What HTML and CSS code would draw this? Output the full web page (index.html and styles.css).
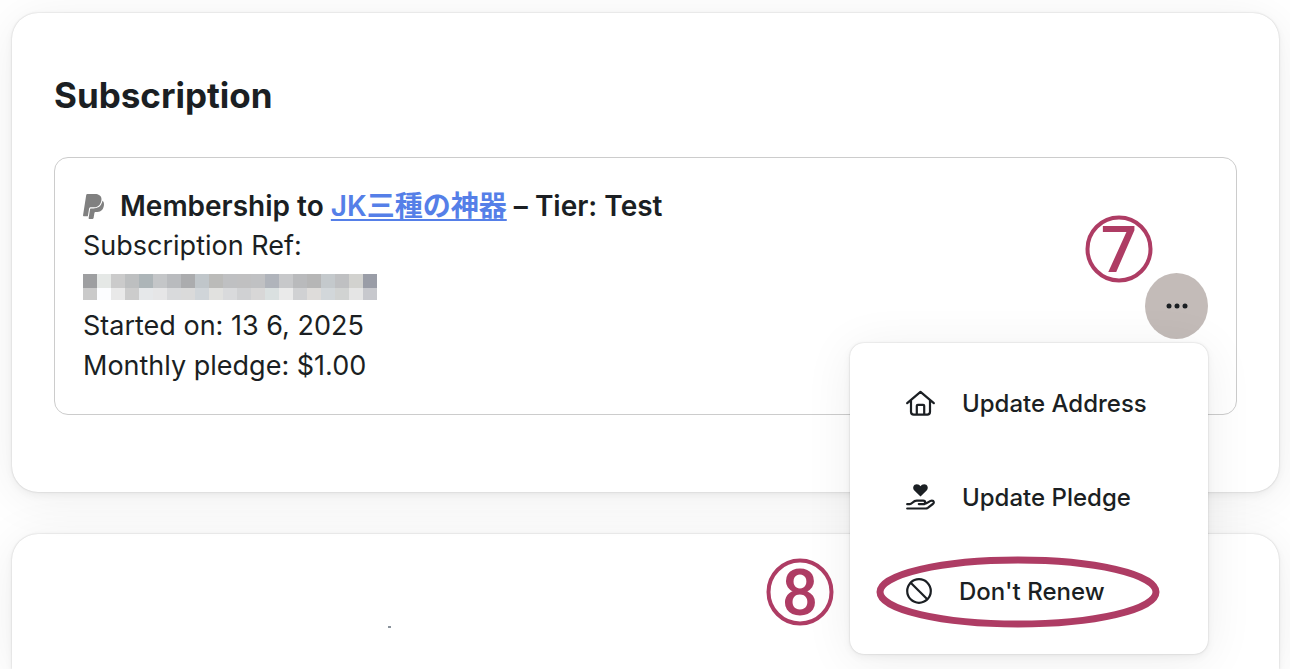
FILE: index.html
```
<!DOCTYPE html>
<html lang="en">
<head>
    <meta charset="UTF-8">
    <meta name="viewport" content="width=device-width, initial-scale=1.0">
    <title>Subscription</title>

    <link rel="stylesheet" href="styles.css">
</head>
<body>
    <main>
        <section class="card">
            <h2>Subscription</h2>
            <div class="subscription">
                <div class="details">
                    <h3>
                        <svg class="paypal" viewBox="0 29 384 454" aria-hidden="true"><path d="M111.4 295.9c-3.5 19.2-17.4 108.7-21.5 134-.3 1.8-1 2.5-3 2.5H12.3c-7.6 0-13.1-6.6-12.1-13.9L58.8 46.6c1.5-9.6 10.1-16.9 20-16.9 152.3 0 165.1-3.7 204 11.4 60.1 23.3 65.6 79.5 44 140.3-21.5 62.6-72.5 89.5-140.1 90.3-43.4.7-69.5-7-75.3 24.2zM357.1 152c-1.8-1.3-2.5-1.8-3 1.3-2 11.4-5.1 22.5-8.8 33.6-39.9 113.8-150.5 103.9-204.5 103.9-6.1 0-10.1 3.3-10.9 9.4-22.6 140.4-27.1 169.7-27.1 169.7-1 7.1 3.5 12.9 10.6 12.9h63.5c8.6 0 15.7-6.3 17.4-14.9.7-5.4-1.1 6.1 14.4-91.3 4.6-22 14.3-19.7 29.3-19.7 71 0 126.4-28.8 142.9-112.3 6.5-34.8 4.6-71.4-23.8-92.6z"/></svg>
                        <span>Membership to <a href="#">JK三種の神器</a> – Tier: Test</span>
                    </h3>
                    <p>Subscription Ref:</p>
                    <!-- reference number is masked -->
                    <svg class="masked" viewBox="0 0 294 26" aria-hidden="true">
                        <g class="mask-row">
                            <path fill="#9e9fa1" d="M0 0h14v14H0z"/><path fill="#e5e8e6" d="M14 0h14v14H14z"/><path fill="#cbcbcb" d="M28 0h14v14H28z"/><path fill="#bdbfc0" d="M42 0h14v14H42z"/><path fill="#adb5b8" d="M56 0h14v14H56z"/><path fill="#c4c6c8" d="M70 0h14v14H70z"/><path fill="#b9bbbe" d="M84 0h14v14H84z"/><path fill="#abacae" d="M98 0h14v14H98z"/><path fill="#c0c6ca" d="M112 0h14v14h-14z"/><path fill="#bbbbb9" d="M126 0h14v14h-14z"/><path fill="#bfc0c2" d="M140 0h14v14h-14z"/><path fill="#c0c0c1" d="M154 0h14v14h-14z"/><path fill="#c0c1c3" d="M168 0h14v14h-14z"/><path fill="#b0b4bb" d="M182 0h14v14h-14z"/><path fill="#c7c8ca" d="M196 0h14v14h-14z"/><path fill="#b9babc" d="M210 0h14v14h-14z"/><path fill="#b6b6b6" d="M224 0h14v14h-14z"/><path fill="#c4c9cc" d="M238 0h14v14h-14z"/><path fill="#bfc0c2" d="M252 0h14v14h-14z"/><path fill="#d2d2cf" d="M266 0h14v14h-14z"/><path fill="#9a9da7" d="M280 0h14v14h-14z"/>
                        </g>
                        <g class="mask-row">
                            <path fill="#cacaca" d="M0 14h14v12H0z"/><path fill="#fcfdff" d="M14 14h14v12H14z"/><path fill="#e9e9e9" d="M28 14h14v12H28z"/><path fill="#cccccc" d="M42 14h14v12H42z"/><path fill="#e6e8ea" d="M56 14h14v12H56z"/><path fill="#e6e6e7" d="M70 14h14v12H70z"/><path fill="#d9dadc" d="M84 14h14v12H84z"/><path fill="#dadada" d="M98 14h14v12H98z"/><path fill="#d0d5d9" d="M112 14h14v12h-14z"/><path fill="#e1e1df" d="M126 14h14v12h-14z"/><path fill="#d9dadc" d="M140 14h14v12h-14z"/><path fill="#d0d1d3" d="M154 14h14v12h-14z"/><path fill="#d8d7d7" d="M168 14h14v12h-14z"/><path fill="#dae0e0" d="M182 14h14v12h-14z"/><path fill="#eaeaea" d="M196 14h14v12h-14z"/><path fill="#d0d1d3" d="M210 14h14v12h-14z"/><path fill="#dedcda" d="M224 14h14v12h-14z"/><path fill="#d2d7da" d="M238 14h14v12h-14z"/><path fill="#d1d3d2" d="M252 14h14v12h-14z"/><path fill="#e5e5e5" d="M266 14h14v12h-14z"/><path fill="#c7c8cd" d="M280 14h14v12h-14z"/>
                        </g>
                    </svg>
                    <p>Started on: 13 6, 2025</p>
                    <p>Monthly pledge: $1.00</p>
                </div>

                <div class="actions">
                    <button class="more" type="button" aria-label="More options">
                        <svg width="22" height="6" viewBox="0 0 22 6" aria-hidden="true"><circle cx="3" cy="3" r="2.5"/><circle cx="11" cy="3" r="2.5"/><circle cx="19" cy="3" r="2.5"/></svg>
                    </button>
                    <svg class="step step-more" viewBox="0 0 68 68">
                        <circle cx="34" cy="34" r="31.5"/>
                        <text x="34" y="57">7</text>
                    </svg>

                    <div class="menu">
                        <button class="menu-item" type="button">
                            <svg class="line-icon" width="29" height="26" viewBox="0 0 29 26" aria-hidden="true"><path d="M1.2 13.2 14.5 1.8l13.3 11.4M5 10.5v11.3a2.8 2.8 0 0 0 2.8 2.8h13.4a2.8 2.8 0 0 0 2.8-2.8V10.5M10.8 24.5v-8.7a1 1 0 0 1 1-1h5.4a1 1 0 0 1 1 1v8.7"/></svg>
                            <span>Update Address</span>
                        </button>
                        <button class="menu-item" type="button">
                            <svg class="line-icon" width="29" height="26" viewBox="0 0 29 26" aria-hidden="true"><path class="solid" d="M14.5 12.5 8.6 6.7C5.7 3.8 7.7.2 10.8.2c1.7 0 2.9.8 3.7 2 .8-1.2 2-2 3.7-2 3.1 0 5.1 3.6 2.2 6.5z"/><path d="M1.2 20.2h2.6c2.4 0 3-3.6 7-3.6h6.4c2.8 0 2.6 3.5 0 3.5h-4.4M18.6 19.8c3.3-.4 4.5-3.2 7.3-3.2 2.2 0 2.5 2.3.9 3.4l-5 3.8c-.7.5-1.3.7-2.2.7H1.2"/></svg>
                            <span>Update Pledge</span>
                        </button>
                        <button class="menu-item" type="button">
                            <svg class="line-icon" width="26" height="26" viewBox="0 0 26 26" aria-hidden="true"><circle cx="13" cy="13" r="11.8"/><path d="m4.7 4.7 16.6 16.6"/></svg>
                            <span>Don't Renew</span>
                            <svg class="highlight" viewBox="0 0 284 72" aria-hidden="true"><ellipse cx="142" cy="36" rx="138" ry="32"/></svg>
                        </button>
                        <svg class="step step-renew" viewBox="0 0 68 68">
                            <circle cx="34" cy="34" r="31.5"/>
                            <text x="34" y="57">8</text>
                        </svg>
                    </div>
                </div>
            </div>
        </section>

        <section class="card card-next">
            <svg width="4" height="2" viewBox="0 0 4 2" aria-hidden="true"><path fill="#8a939c" d="M0 1h1V0h3v2H1V1z"/></svg>
        </section>
    </main>
</body>
</html>
```
FILE: styles.css
```
* {
    box-sizing: border-box;
    padding: 0;
    margin: 0;
}

body {
    background-color: white;
    color: #1b1f23;
    font-family: Inter, "Noto Sans CJK JP", sans-serif;
    font-size: 27px;
    line-height: 40px;
}

main {
    display: flex;
    flex-direction: column;
    gap: 42px;
    min-height: 100vh;
    padding: 13px 11px 0 12px;
}

.card {
    padding: 62px 42px 77px;
    border-radius: 26px;
    background-color: white;
    box-shadow: 0 0 2px rgba(0, 0, 0, 0.2), 0 3px 8px rgba(0, 0, 0, 0.05), 0 6px 50px rgba(0, 0, 0, 0.07);
}

.card:first-child {
    position: relative;
    z-index: 1;
}

.card-next {
    display: flex;
    flex: 1;
    align-items: flex-start;
    padding: 92px 42px 0 375px;
    border-radius: 26px 26px 0 0;
}

h2 {
    margin-bottom: 42px;
    font-size: 35px;
    font-weight: 700;
    line-height: 40px;
}

.subscription {
    display: flex;
    justify-content: space-between;
    align-items: center;
    padding: 28px;
    border: 1px solid #cccccc;
    border-radius: 14px;
}

h3 {
    display: flex;
    align-items: center;
    gap: 16px;
    font-size: 28px;
    font-weight: 600;
}

.paypal {
    width: 21px;
    height: 25px;
    fill: #808080;
}

h3 a {
    color: #557fe8;
    text-decoration-thickness: 2px;
    text-underline-offset: 3px;
}

.masked {
    display: block;
    width: 294px;
    height: 26px;
    margin: 8px 0 6px;
    shape-rendering: crispEdges;
}

.actions {
    position: relative;
    margin-top: 40px;
}

.more {
    display: flex;
    justify-content: center;
    align-items: center;
    width: 63px;
    height: 66px;
    border: none;
    border-radius: 50%;
    background-color: #c3bbb8;
}

.more svg {
    fill: #1b1f23;
}

.menu {
    position: absolute;
    top: 70px;
    right: 0;
    width: 358px;
    padding: 13px 0 16px;
    border-radius: 14px;
    background-color: white;
    box-shadow: 0 0 2px rgba(0, 0, 0, 0.2), 0 3px 8px rgba(0, 0, 0, 0.05), 0 6px 50px rgba(0, 0, 0, 0.07);
}

.menu-item {
    position: relative;
    display: flex;
    align-items: center;
    gap: 27px;
    width: 100%;
    height: 94px;
    padding: 0 56px;
    border: none;
    background: none;
    color: inherit;
    font-family: inherit;
    font-size: 24px;
    font-weight: 500;
    white-space: nowrap;
}

.line-icon {
    flex: none;
    fill: none;
    stroke: #1b1f23;
    stroke-width: 2.2;
    stroke-linecap: round;
    stroke-linejoin: round;
}

.line-icon .solid {
    fill: #1b1f23;
    stroke: none;
}

/* step markers over the controls */
.step {
    position: absolute;
    width: 68px;
    height: 68px;
    overflow: visible;
}

.step circle {
    fill: none;
    stroke: #ae3c64;
    stroke-width: 4;
}

.step text {
    fill: #ae3c64;
    font-family: Roboto, sans-serif;
    font-size: 64px;
    font-weight: 500;
    text-anchor: middle;
}

.step-more {
    top: -58px;
    left: -60px;
}

.step-renew {
    top: 215px;
    left: -84px;
}

.highlight {
    position: absolute;
    top: 12px;
    left: 26px;
    width: 284px;
    height: 72px;
    fill: none;
    stroke: #ae3c64;
    stroke-width: 7;
}
```
